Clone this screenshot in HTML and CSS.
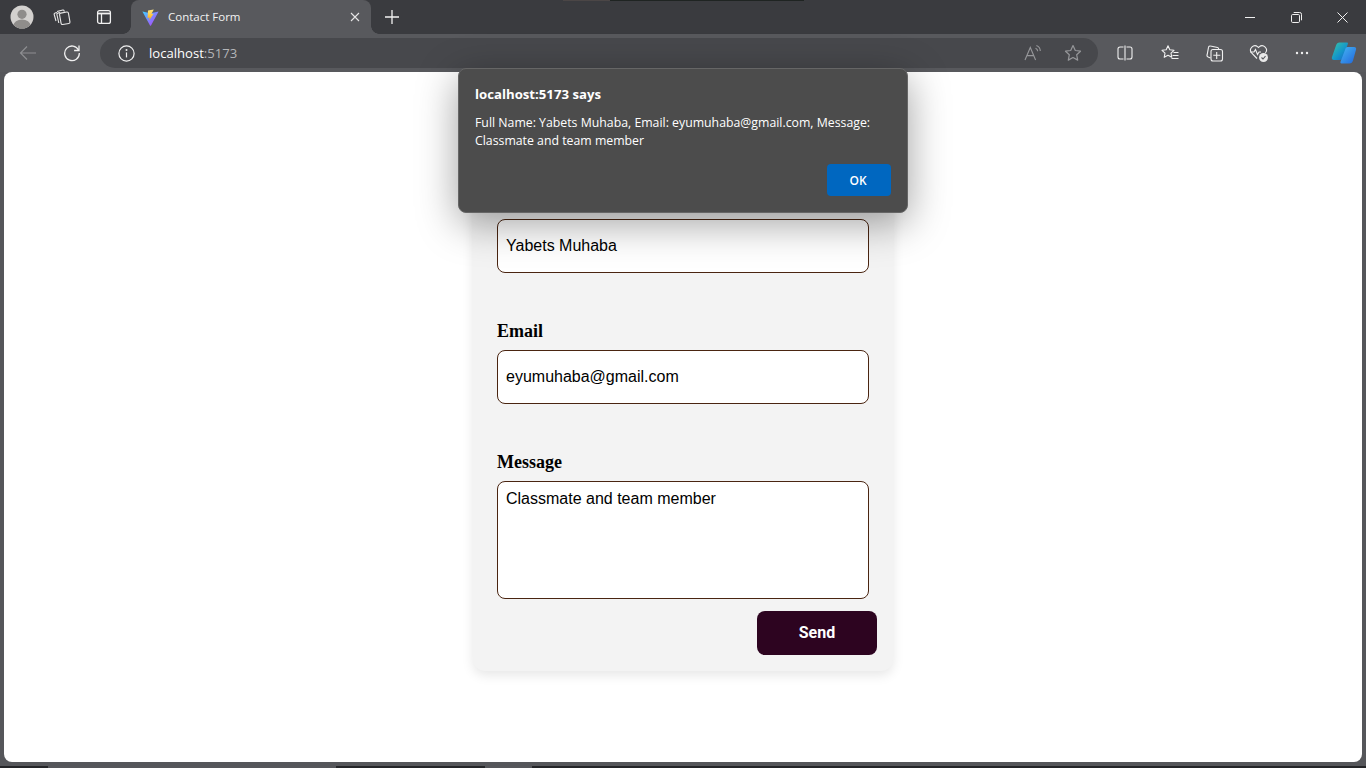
FILE: index.html
```html
<!DOCTYPE html>
<html lang="en">
<head>
<meta charset="utf-8">
<title>Contact Form</title>
<link rel="stylesheet" href="styles.css">
</head>
<body>
<div class="titlebar">
  <div class="slot slot-avatar">
    <svg width="24" height="24" viewBox="0 0 24 24"><defs><clipPath id="av"><circle cx="12" cy="12" r="11.5"/></clipPath></defs><circle cx="12" cy="12" r="11.5" fill="#d3d1cf"/><g clip-path="url(#av)" fill="#8f8d8b"><circle cx="12" cy="9.3" r="4.6"/><ellipse cx="12" cy="20.5" rx="8.5" ry="6"/></g></svg>
  </div>
  <div class="slot slot-work">
    <svg width="18" height="18" viewBox="0 0 18 18" fill="none" stroke="#e8e8e8" stroke-width="1.1"><path d="M3 13 1.200 6.500a1.200 1.200 0 0 1 .9-1.500L4 4.500"/><path d="M5.800 15 3.900 6.500a1.200 1.200 0 0 1 .9-1.400L7 4.500"/><rect x="7.200" y="4.600" width="9" height="11.600" rx="1.400" transform="rotate(-10 11 10)"/><path d="M4 3.500 9.800 2a1 1 0 0 1 1.200.7l.3 1"/></svg>
  </div>
  <div class="slot slot-vert">
    <svg width="16" height="16" viewBox="0 0 16 16" fill="none" stroke="#f0f0f0" stroke-width="1.300"><rect x="1.600" y="1.600" width="12.800" height="12.800" rx="2"/><path d="M1.600 4.500h12.800" stroke-width="1.800"/><path d="M5.500 4.800v9.600"/></svg>
  </div>
  <div class="tab">
    <svg class="vite" width="17" height="17" viewBox="0 0 17 17"><defs><linearGradient id="vt" x1="0" y1="0" x2="1" y2="1"><stop offset="0" stop-color="#41d1ff"/><stop offset="1" stop-color="#bd34fe"/></linearGradient><linearGradient id="vb" x1="0" y1="0" x2="0" y2="1"><stop offset="0" stop-color="#ffea83"/><stop offset="1" stop-color="#ffa800"/></linearGradient></defs><path d="M.4 2.600 8 16.400a.6.6 0 0 0 1 0L16.600 2.600 8.500 4.200z" fill="url(#vt)"/><path d="M11.800.4 6 1.500l-.4 7.400 2-.4-.5 3 4.500-6.800-2.200.4z" fill="url(#vb)"/></svg>
    <span class="tab-title">Contact Form</span>
    <svg class="tab-close" width="10" height="10" viewBox="0 0 10 10" stroke="#e6e6e6" stroke-width="1.100"><path d="M1 1l8 8M9 1l-8 8"/></svg>
  </div>
  <div class="slot slot-plus">
    <svg width="16" height="16" viewBox="0 0 16 16" stroke="#f2f2f2" stroke-width="1.300"><path d="M8 1v14M1 8h14"/></svg>
  </div>
  <div class="winctl">
    <div class="winbtn"><svg width="10" height="10" viewBox="0 0 10 10" stroke="#f0f0f0"><path d="M0 5.500h10"/></svg></div>
    <div class="winbtn"><svg width="11" height="11" viewBox="0 0 11 11" fill="none" stroke="#f0f0f0"><rect x=".5" y="2.500" width="8" height="8" rx="1.200"/><path d="M2.700 .5h6a1.800 1.800 0 0 1 1.800 1.800v6"/></svg></div>
    <div class="winbtn"><svg width="11" height="11" viewBox="0 0 11 11" stroke="#f0f0f0"><path d="M.5.5l10 10M10.500.5l-10 10"/></svg></div>
  </div>
</div>
<div class="toolbar">
  <div class="tbtn tbtn-back"><svg width="18" height="16" viewBox="0 0 18 16" fill="none" stroke="#8d8e91" stroke-width="1.200"><path d="M17 8H1.500M8 1.500 1.500 8 8 14.500"/></svg></div>
  <div class="tbtn tbtn-reload"><svg width="18" height="18" viewBox="0 0 18 18" fill="none" stroke="#f0f0f0" stroke-width="1.300"><path d="M15.600 6.200A7.300 7.300 0 1 0 16.300 9"/><path d="M16 1.600v4.900h-4.900"/></svg></div>
  <div class="address">
    <svg class="info" width="17" height="17" viewBox="0 0 17 17" fill="none" stroke="#f0f0f0" stroke-width="1.200"><circle cx="8.500" cy="8.500" r="7.600"/><path d="M8.500 7.400v5"/><circle cx="8.500" cy="5" r=".4" fill="#f0f0f0"/></svg>
    <span class="url">localhost<span class="port">:5173</span></span>
    <svg class="addr-ic" width="18" height="18" viewBox="0 0 18 18" fill="none" stroke="#96979a" stroke-width="1.100"><path d="M1 16 6.300 3.500 11.600 16M3 11.600h6.600"/><path d="M11.500 4.200a3.400 3.400 0 0 1 2.200 3M12.400 1.600a6 6 0 0 1 3.900 5.400"/></svg>
    <svg class="addr-ic" width="18" height="18" viewBox="0 0 18 18" fill="none" stroke="#96979a" stroke-width="1.200"><path d="m9 1.600 2.300 4.900 5.200.7-3.800 3.600 1 5.300L9 13.500l-4.700 2.600 1-5.300-3.800-3.600 5.200-.7z" stroke-linejoin="round"/></svg>
  </div>
  <div class="tools">
    <div class="tool t-split"><svg width="16" height="16" viewBox="0 0 16 16" fill="none" stroke="#f0f0f0" stroke-width="1.100"><path d="M6.500 2H3a2 2 0 0 0-2 2v8a2 2 0 0 0 2 2h3.500M9.500 2H13a2 2 0 0 1 2 2v8a2 2 0 0 1-2 2H9.500M8 .5v15"/></svg></div>
    <div class="tool t-fav"><svg width="18" height="18" viewBox="0 0 18 18" fill="none" stroke="#f0f0f0" stroke-width="1.100"><path d="m7 1.800 1.800 4 4.200.5-3 2.900.8 4.100L7 11.200l-3.800 2.100.8-4.100-3-2.900 4.200-.5z" stroke-linejoin="round"/><path d="M12.500 8.500h5M11.500 11.500h6M10.500 14.500h7"/></svg></div>
    <div class="tool t-coll"><svg width="18" height="18" viewBox="0 0 18 18" fill="none" stroke="#f0f0f0" stroke-width="1.100"><path d="M4.500 14 2.100 13a1.600 1.600 0 0 1-1-2L2.500 3.400A1.600 1.600 0 0 1 4.500 2l7 1.500a1.600 1.600 0 0 1 1.200 1.600"/><rect x="5" y="5.500" width="11.500" height="11.500" rx="2"/><path d="M10.700 8v7M7.300 11.300h7"/></svg></div>
    <div class="tool t-health"><svg width="20" height="20" viewBox="0 0 20 20" fill="none"><path d="M8 15.500 2.600 10A4.400 4.400 0 0 1 8.800 3.800L9.500 4.500l.7-.7a4.400 4.400 0 0 1 6.200 6.200" stroke="#f0f0f0" stroke-width="1.100"/><path d="M1 9h4l1.500-2.500 2 5L10 9h2" stroke="#f0f0f0" stroke-width="1.100"/><circle cx="14.500" cy="14.500" r="4.500" fill="#e8e8e8"/><path d="m12.500 14.500 1.500 1.500 2.500-2.800" stroke="#55565a" stroke-width="1.100"/></svg></div>
    <div class="tool t-more"><svg width="14" height="4" viewBox="0 0 14 4" fill="#f0f0f0"><circle cx="2" cy="2" r="1.200"/><circle cx="7" cy="2" r="1.200"/><circle cx="12" cy="2" r="1.200"/></svg></div>
    <div class="tool t-copilot"><svg width="26" height="24" viewBox="0 0 26 24"><defs><linearGradient id="c1" x1="0" y1="0" x2="1" y2="1"><stop offset="0" stop-color="#39c6a5"/><stop offset=".55" stop-color="#1597c9"/><stop offset="1" stop-color="#1a5fc8"/></linearGradient><linearGradient id="c2" x1="0" y1="0" x2="1" y2="1"><stop offset="0" stop-color="#46b6f2"/><stop offset="1" stop-color="#2166dc"/></linearGradient></defs><path d="M8.500 1.500h7.500c1.500 0 1 1.200.5 2.500L12 16.500c-.6 1.800-1.600 2.500-3 2.500H3C1 19 .5 17.500 1 16l4-11.500C5.600 2.600 6.800 1.500 8.500 1.500z" fill="url(#c1)"/><path d="M16.500 6H23c1.800 0 2.500 1.200 2 2.800l-3 10.700c-.6 2-1.800 3-3.500 3h-8c-1.200 0-1.300-1-.8-2.200L14 9c.5-1.800 1.200-3 2.500-3z" fill="url(#c2)"/></svg></div>
  </div>
</div>
<main class="viewport">
  <form class="card">
    <div class="field">
      <div class="control control-line">Yabets Muhaba</div>
    </div>
    <div class="field">
      <label class="label">Email</label>
      <div class="control control-line">eyumuhaba@gmail.com</div>
    </div>
    <div class="field">
      <label class="label">Message</label>
      <div class="control control-area">Classmate and team member</div>
    </div>
    <div class="actions"><button type="button" class="send">Send</button></div>
  </form>
</main>
<div class="bottom-edge"><span class="seg seg-a"></span><span class="seg seg-b"></span></div>
<div class="dialog" role="alertdialog">
  <div class="dialog-title">localhost:5173 says</div>
  <p class="dialog-msg">Full Name: Yabets Muhaba, Email: eyumuhaba@gmail.com, Message: Classmate and team member</p>
  <div class="dialog-actions"><button type="button" class="ok">OK</button></div>
</div>
</body>
</html>
```
FILE: styles.css
```css
* { box-sizing: border-box; }
html, body { margin: 0; height: 100%; }
body {
  position: relative;
  width: 1366px;
  height: 768px;
  overflow: hidden;
  display: flex;
  flex-direction: column;
  background: #55565a;
  font-family: "Open Sans", "Liberation Sans", sans-serif;
}
.titlebar {
  position: relative;
  height: 34px;
  flex: none;
  display: flex;
  align-items: center;
  background: #3a3b3f;
}
.titlebar::before {
  content: "";
  position: absolute;
  top: 0;
  left: 563px;
  width: 241px;
  height: 1px;
  background: linear-gradient(to right, #4b4646 0, #4b4646 47px, #1f2422 47px);
}
.slot { height: 34px; display: flex; align-items: center; justify-content: center; flex: none; }
.slot-avatar { width: 44px; }
.slot-work { width: 36px; }
.slot-vert { width: 48px; }
.slot-plus { width: 42px; margin-left: 0; }
.tab {
  position: relative;
  width: 240px;
  height: 34px;
  margin-left: 3px;
  padding: 0 11px;
  display: flex;
  align-items: center;
  background: #58595d;
  border-radius: 8px 8px 0 0;
  color: #f2f2f2;
  font-size: 11.5px;
}
.tab::before, .tab::after {
  content: "";
  position: absolute;
  bottom: 0;
  width: 8px;
  height: 8px;
}
.tab::before { left: -8px; background: radial-gradient(circle at 0 0, transparent 7.5px, #58595d 8px); }
.tab::after { right: -8px; background: radial-gradient(circle at 100% 0, transparent 7.5px, #58595d 8px); }
.vite { flex: none; }
.tab-title { margin-left: 9px; padding-bottom: 2px; flex: 1; }
.tab-close { flex: none; margin-right: 0; }
.winctl { margin-left: auto; margin-right: 1px; display: flex; }
.winbtn { width: 46px; height: 34px; display: flex; align-items: center; justify-content: center; }
.toolbar {
  height: 38px;
  flex: none;
  display: flex;
  align-items: center;
  background: #58595d;
}
.tbtn { flex: none; height: 38px; display: flex; align-items: center; justify-content: center; }
.tbtn-back { width: 56px; }
.tbtn-reload { width: 32px; }
.address {
  width: 998px;
  height: 30px;
  margin-left: 12px;
  flex: none;
  display: flex;
  align-items: center;
  padding: 0 16px 0 18px;
  border-radius: 15px;
  background: #47484c;
  color: #fff;
  font-size: 13.1px;
}
.info { flex: none; }
.url { margin-left: 14px; flex: 1; }
.port { color: #b4b5b8; }
.addr-ic { flex: none; margin-left: 22px; }
.tools { display: flex; align-items: center; flex: 1; }
.tool { height: 38px; display: flex; align-items: center; justify-content: center; flex: none; }
.t-split { width: 54px; }
.t-fav { width: 36px; }
.t-coll { width: 54px; }
.t-health { width: 33px; }
.t-more { width: 54px; }
.t-copilot { width: 30px; }
.viewport {
  flex: none;
  height: 690px;
  margin: 0 4px;
  display: flex;
  justify-content: center;
  align-items: flex-start;
  background: #fff;
  border-radius: 8px;
}
.card {
  width: 420px;
  margin-top: 30px;
  padding: 117px 24px 16px;
  display: flex;
  flex-direction: column;
  background: #f3f3f3;
  border-radius: 12px;
  box-shadow: 0 4px 12px rgba(0, 0, 0, .1);
}
.field { display: flex; flex-direction: column; margin-bottom: 48px; }
.field:nth-child(3) { margin-bottom: 12px; }
.label {
  display: block;
  height: 20px;
  margin-bottom: 9px;
  font: bold 18px/20px "Liberation Serif", serif;
  color: #000;
}
.control {
  background: #fff;
  border: 1px solid #4a2511;
  border-radius: 8px;
  padding: 0 8px;
  color: #000;
  font: 16px/18px "Liberation Sans", sans-serif;
}
.control-line { height: 54px; display: flex; align-items: center; }
.control-area { height: 118px; padding-top: 8px; }
.actions { display: flex; justify-content: flex-end; margin-right: -8px; }
.send {
  width: 120px;
  height: 44px;
  padding: 0 0 2px;
  border: 0;
  border-radius: 8px;
  background: #2d0420;
  color: #fff;
  font: bold 16px "Roboto", sans-serif;
}
.bottom-edge {
  position: relative;
  flex: 1;
}
.seg { position: absolute; bottom: 0; height: 2px; }
.bottom-edge::before {
  content: "";
  position: absolute;
  left: 0; right: 0; bottom: 0;
  height: 2px;
  background: #242528;
}
.seg-a { left: 48px; width: 288px; background: #55565a; }
.seg-b { left: 485px; width: 47px; background: #55565a; }
.dialog {
  position: absolute;
  left: 458px;
  top: 68px;
  width: 450px;
  height: 145px;
  padding: 16px 16px 0;
  background: #4c4c4c;
  border: 1px solid #666;
  border-radius: 8px;
  box-shadow: 0 10px 40px rgba(0, 0, 0, .38);
  color: #fff;
}
.dialog-title { font-size: 13.2px; line-height: 18px; font-weight: 700; }
.dialog-msg { margin: 11px 0 0; font-size: 12.3px; line-height: 18px; }
.dialog-actions { display: flex; justify-content: flex-end; margin-top: 14px; }
.ok {
  width: 64px;
  height: 32px;
  padding: 0 2px 0 0;
  border: 0;
  border-radius: 4px;
  background: #0067c0;
  color: #fff;
  font: 600 12px "Open Sans", sans-serif;
}
```
